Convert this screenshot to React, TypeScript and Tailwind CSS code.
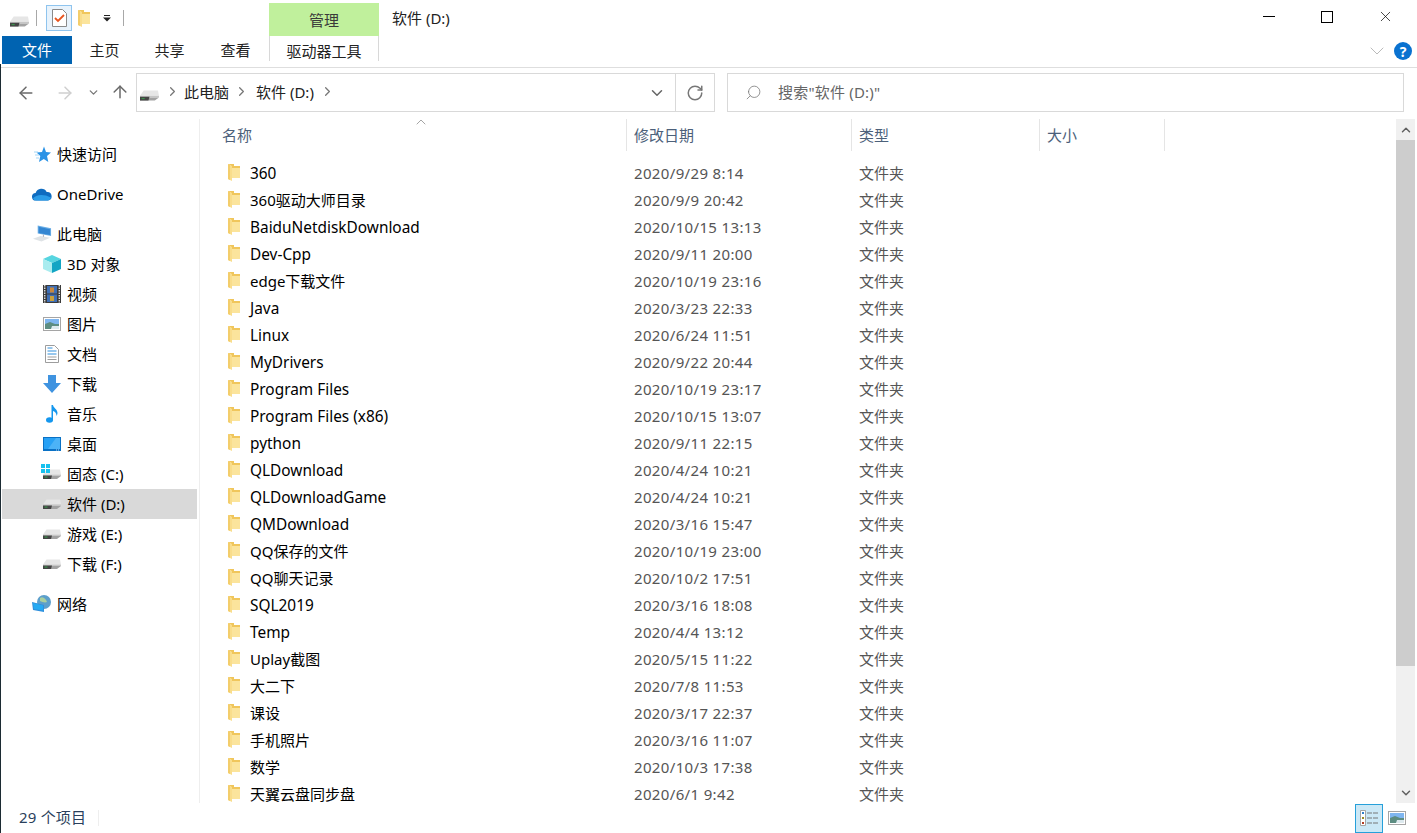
import React from "react";
import { ChevronRight, ChevronDown, ChevronUp, ArrowLeft, ArrowRight, ArrowUp, RotateCw, Search, X } from "lucide-react";

const files: [string, string][] = [
  ["360", "2020/9/29 8:14"],
  ["360驱动大师目录", "2020/9/9 20:42"],
  ["BaiduNetdiskDownload", "2020/10/15 13:13"],
  ["Dev-Cpp", "2020/9/11 20:00"],
  ["edge下载文件", "2020/10/19 23:16"],
  ["Java", "2020/3/23 22:33"],
  ["Linux", "2020/6/24 11:51"],
  ["MyDrivers", "2020/9/22 20:44"],
  ["Program Files", "2020/10/19 23:17"],
  ["Program Files (x86)", "2020/10/15 13:07"],
  ["python", "2020/9/11 22:15"],
  ["QLDownload", "2020/4/24 10:21"],
  ["QLDownloadGame", "2020/4/24 10:21"],
  ["QMDownload", "2020/3/16 15:47"],
  ["QQ保存的文件", "2020/10/19 23:00"],
  ["QQ聊天记录", "2020/10/2 17:51"],
  ["SQL2019", "2020/3/16 18:08"],
  ["Temp", "2020/4/4 13:12"],
  ["Uplay截图", "2020/5/15 11:22"],
  ["大二下", "2020/7/8 11:53"],
  ["课设", "2020/3/17 22:37"],
  ["手机照片", "2020/3/16 11:07"],
  ["数学", "2020/10/3 17:38"],
  ["天翼云盘同步盘", "2020/6/1 9:42"],
];

const Folder = ({ className = "" }: { className?: string }) => (
  <svg width="12" height="17" viewBox="0 0 12 17" className={className}>
    <path d="M0 0h6v2h6v12H3V2z" fill="#f0c65c" />
    <path d="M4 4h8v10H4z" fill="#fbe49c" />
    <path d="M0 0l4 2v15L0 15z" fill="#f9dd8c" />
    <path d="M0 0l2 1v15l-2-1z" fill="#f3cd6b" />
  </svg>
);

const Drive = ({ w = 18, led = "#3a8f4a" }: { w?: number; led?: string }) => (
  <svg width={w} height={(w * 10) / 18} viewBox="0 0 18 10">
    <path d="M0 5.500L3.500 .500H17l1 5z" fill="#e6e6e6" />
    <path d="M0 5.500h18v1.500H0z" fill="#c6c6c6" />
    <path d="M0 7h18l-4 3H0z" fill="#a2a2a2" />
    <path d="M0 6.500h9l-1 3.500H0z" fill="#444" />
    <rect x="1.500" y="7.500" width="3" height="1.200" fill={led} />
  </svg>
);

const Star = () => (
  <svg width="18" height="17" viewBox="0 0 18 17">
    <path d="M11 .5l2 5.500 5 .4-4 3.700 1.300 5.900-4.500-3-4.800 3 1.300-5.900-3.800-3.700 5.500-.4z" fill="#2b93e6" />
    <path d="M1 6h4M2 9h4M3 12h3" stroke="#a5d6f6" strokeWidth="1" />
  </svg>
);

const Cloud = () => (
  <svg width="20" height="14" viewBox="0 0 20 14">
    <path d="M4 13.500a3.800 3.800 0 0 1-.4-7.600A6 6 0 0 1 14.700 5a4.300 4.300 0 0 1 1.300 8.500z" fill="#0f6cc0" />
    <path d="M1 11.500c3-4 10-5 18-1 -.5 2-2 3-3.500 3H4c-1.500 0-2.500-.8-3-2z" fill="#2b9ce8" />
  </svg>
);

const Pc = () => (
  <svg width="21" height="18" viewBox="0 0 21 18">
    <path d="M6 0l14 3v8L6 8.500z" fill="#6aaee6" />
    <path d="M7 1.500l12 2.500v6L7 8z" fill="#3486d2" />
    <path d="M1 14l8-3 10 2-9 4z" fill="#dfe3e6" />
    <path d="M12 9.500v2.500" stroke="#aab" />
  </svg>
);

const Cube = () => (
  <svg width="18" height="18" viewBox="0 0 18 18">
    <path d="M9 0l9 4-9 4-9-4z" fill="#57d5e0" />
    <path d="M0 4l9 4v10l-9-4z" fill="#a9ecef" />
    <path d="M18 4l-9 4v10l9-4z" fill="#12a5c4" />
  </svg>
);

const Film = () => (
  <svg width="18" height="18" viewBox="0 0 18 18">
    <rect width="18" height="18" fill="#3b3b3b" />
    <path d="M1.700 0v18M16.300 0v18" stroke="#ddd" strokeWidth="1.400" strokeDasharray="1.500 1" />
    <rect x="4" y="1" width="10" height="7.500" fill="#3f6fb5" />
    <rect x="4" y="9.500" width="10" height="7.500" fill="#3f6fb5" />
    <rect x="7" y="2.500" width="4" height="5" fill="#c9883d" />
    <rect x="7" y="11" width="4" height="5" fill="#c9a03d" />
  </svg>
);

const Pic = ({ w = 18 }: { w?: number }) => (
  <svg width={w} height={(w * 14) / 18} viewBox="0 0 18 14">
    <rect x="0.500" y="0.500" width="17" height="13" fill="#fff" stroke="#a5a5a5" />
    <rect x="2" y="2" width="14" height="5" fill="#7fb6f0" />
    <path d="M2 7l5-2 5 2 4 0v5H2z" fill="#5d8d82" />
    <path d="M9 9h7v3H8z" fill="#dde9ee" />
  </svg>
);

const Doc = () => (
  <svg width="14" height="18" viewBox="0 0 14 18">
    <path d="M0.500 0.500h9l4 4v13h-13z" fill="#fff" stroke="#9d9d9d" />
    <path d="M2.500 3h5M2.500 6h9M2.500 9h9" stroke="#2f8fdc" />
    <path d="M2.500 12h9M2.500 14.500h9" stroke="#9d9d9d" />
  </svg>
);

const Down = () => (
  <svg width="18" height="18" viewBox="0 0 18 18">
    <path d="M5 0h8v8h5l-9 10L0 8h5z" fill="#3f93e0" />
  </svg>
);

const Note = () => (
  <svg width="12" height="18" viewBox="0 0 12 18">
    <ellipse cx="3.500" cy="15" rx="3.500" ry="2.800" fill="#1597ee" />
    <path d="M5.500 0h1.500c.3 3 4.500 4 4.500 8 0 1-.4 2-1 3 .2-3-2-4.500-3.500-5v9.500H5.500z" fill="#1597ee" />
  </svg>
);

const Desk = () => (
  <svg width="18" height="14" viewBox="0 0 18 14">
    <rect width="18" height="14" fill="#0a71c5" />
    <rect x="1" y="1" width="16" height="11" fill="#27a1f5" />
    <path d="M5 12L13 1h4v11z" fill="#4cb3f7" />
    <path d="M13 13h4" stroke="#fff" strokeWidth="0.700" strokeDasharray="1 1" />
  </svg>
);

const Win = () => (
  <svg width="9" height="9" viewBox="0 0 9 9" className="absolute -left-px -top-[5px]">
    <path d="M0 0h4v4H0zM5 0h4v4H5zM0 5h4v4H0zM5 5h4v4H5z" fill="#18c1ee" />
  </svg>
);

const Net = () => (
  <svg width="20" height="18" viewBox="0 0 20 18">
    <circle cx="12" cy="7" r="7" fill="#5c9fcb" />
    <path d="M8 3c3-2 6 1 7 4-2 1-5 0-7-1z" fill="#a9cf9e" />
    <path d="M0 7l12 3v7L1 15z" fill="#2f8fdc" />
    <path d="M1 8l10 2.500v5L2 14z" fill="#25aaf2" />
  </svg>
);

const NavRow = ({ icon, label, tier = 0, active = false, mt = "" }: { icon: React.ReactNode; label: string; tier?: number; active?: boolean; mt?: string }) => (
  <div className={`flex h-[30px] items-center shrink-0 ${active ? "bg-[#d9d9d9]" : ""} ${mt}`}>
    <div className={`flex w-[20px] justify-center ${tier ? "ml-[40px]" : "ml-[30px]"} relative`}>{icon}</div>
    <span className="ml-[5px] pt-px whitespace-nowrap text-[15px] text-black">{label}</span>
  </div>
);

const HeadCol = ({ w, label }: { w: string; label: string }) => (
  <div className={`${w} pl-[7px] pt-[1px] h-[32px] flex items-center border-r border-[#e5e5e5] text-[15px] text-[#4c607a] shrink-0`}>{label}</div>
);

const tab = "h-[28px] flex items-center justify-center text-[15px] pt-[1px]";

export default function App() {
  return (
    <div className="relative w-[1417px] h-[833px] overflow-hidden bg-white flex flex-col text-black" style={{ fontFamily: '"Noto Sans", "Noto Sans CJK SC", sans-serif' }}>
      <div className="absolute left-0 top-[64px] bottom-0 w-px bg-[#1c2b33]" />
      <div className="h-[36px] flex shrink-0">
        <div className="w-[269px] flex items-center pl-[10px] shrink-0">
          <div className="mt-[7px] flex"><Drive w={19} /></div>
          <div className="ml-[7px] h-[16px] w-px bg-[#a8a8a8]" />
          <div className="ml-[9px] w-[26px] h-[26px] border border-[#8fc4ee] bg-[#e8f3fc] flex items-center justify-center">
            <svg width="15" height="18" viewBox="0 0 15 18">
              <path d="M.5.500h10l4 4v13H.5z" fill="#fff" stroke="#8a8a8a" />
              <path d="M3 9l3 3 6-6" stroke="#e8541e" strokeWidth="1.800" fill="none" />
            </svg>
          </div>
          <Folder className="ml-[6px]" />
          <svg width="8" height="7" viewBox="0 0 8 7" className="ml-[13px]">
            <path d="M1 0h6v1H1zM0 2.500h8L4 6.500z" fill="#222" />
          </svg>
          <div className="ml-[12px] h-[16px] w-px bg-[#a8a8a8]" />
        </div>
        <div className="mt-[3px] pt-[1px] w-[110px] h-[33px] bg-[#c0f09c] flex items-center justify-center text-[15px] text-[#3a3a3a] shrink-0">管理</div>
        <div className="ml-[13px] mt-[3px] h-[30px] flex items-center text-[15px] text-[#222]">软件 (D:)</div>
        <div className="ml-auto flex">
          <div className="w-[58px] h-[33px] flex items-center justify-center"><div className="w-[12px] h-px bg-black" /></div>
          <div className="w-[58px] h-[33px] flex items-center justify-center"><div className="w-[12px] h-[12px] border border-black" /></div>
          <div className="w-[59px] mr-[2px] h-[33px] flex items-center justify-center"><X size={17} strokeWidth={1} color="#000" /></div>
        </div>
      </div>

      <div className="h-[31px] flex items-stretch shrink-0 border-b border-[#dedede] box-content">
        <div className={`ml-[2px] w-[70px] bg-[#0063b1] text-white ${tab}`}>文件</div>
        <div className={`w-[65px] text-[#222] ${tab}`}>主页</div>
        <div className={`w-[65px] text-[#222] ${tab}`}>共享</div>
        <div className={`w-[67px] text-[#222] ${tab}`}>查看</div>
        <div className="w-[110px] h-[25px] pt-[5px] border-x border-[#d8d8d8] flex items-center justify-center text-[15px] text-[#222]">驱动器工具</div>
        <div className="ml-auto flex items-center h-[30px]">
          <ChevronDown size={24} strokeWidth={0.8} color="#a8a8a8" />
          <div className="ml-[5px] mr-[5px] w-[18px] h-[18px] rounded-full bg-[#0a72d0] text-white text-[14px] font-bold flex items-center justify-center">?</div>
        </div>
      </div>

      <div className="h-[39px] mt-[5px] flex items-center shrink-0">
        <ArrowLeft size={20} strokeWidth={1.800} color="#6a6a6a" className="ml-[16px]" />
        <ArrowRight size={20} strokeWidth={1.800} color="#cfcfcf" className="ml-[19px]" />
        <ChevronDown size={13} strokeWidth={2.400} color="#777" className="ml-[12px]" />
        <ArrowUp size={20} strokeWidth={1.800} color="#6a6a6a" className="ml-[10px] -mt-[1px]" />
        <div className="ml-[6px] w-[539px] h-[39px] border border-[#d9d9d9] border-r-0 flex items-center">
          <div className="ml-[3px] mt-[6px] flex"><Drive w={19} /></div>
          <ChevronRight size={15} strokeWidth={2} color="#777" className="ml-[6px] -mt-[3px]" />
          <span className="ml-[4px] text-[15px] text-[#222]">此电脑</span>
          <ChevronRight size={15} strokeWidth={2} color="#777" className="ml-[5px] -mt-[3px]" />
          <span className="ml-[7px] text-[15px] text-[#222]">软件 (D:)</span>
          <ChevronRight size={15} strokeWidth={2} color="#777" className="ml-[6px] -mt-[3px]" />
          <ChevronDown size={18} strokeWidth={2} color="#666" className="ml-auto mr-[9px]" />
        </div>
        <div className="w-[40px] h-[39px] border border-[#d9d9d9] flex items-center justify-center">
          <RotateCw size={18} strokeWidth={2} color="#777" />
        </div>
        <div className="ml-[12px] w-[677px] h-[39px] border border-[#d9d9d9] flex items-center">
          <Search size={17} strokeWidth={1.100} color="#777" className="ml-[17px] -scale-x-100" />
          <span className="ml-[16px] text-[15px] tracking-[0.2px] text-[#666]">搜索"软件 (D:)"</span>
        </div>
      </div>

      <div className="flex-1 flex min-h-0 mt-[7px]">
        <div className="w-[200px] shrink-0 flex flex-col border-r border-[#eeeeee] pt-[20px] pl-[2px] pr-[2px]">
          <NavRow icon={<Star />} label="快速访问" />
          <NavRow icon={<Cloud />} label="OneDrive" mt="mt-[10px]" />
          <NavRow icon={<Pc />} label="此电脑" mt="mt-[10px]" />
          <NavRow tier={1} icon={<Cube />} label="3D 对象" />
          <NavRow tier={1} icon={<Film />} label="视频" />
          <NavRow tier={1} icon={<Pic />} label="图片" />
          <NavRow tier={1} icon={<Doc />} label="文档" />
          <NavRow tier={1} icon={<Down />} label="下载" />
          <NavRow tier={1} icon={<Note />} label="音乐" />
          <NavRow tier={1} icon={<Desk />} label="桌面" />
          <NavRow tier={1} icon={<><Win /><Drive /></>} label="固态 (C:)" />
          <NavRow tier={1} active icon={<Drive />} label="软件 (D:)" />
          <NavRow tier={1} icon={<Drive />} label="游戏 (E:)" />
          <NavRow tier={1} icon={<Drive />} label="下载 (F:)" />
          <NavRow icon={<Net />} label="网络" mt="mt-[10px]" />
        </div>
        <div className="flex-1 flex flex-col min-w-0 relative overflow-hidden">
          <ChevronUp size={16} strokeWidth={1} color="#777" className="absolute left-[213px] -top-[5px]" />
          <div className="flex shrink-0 pl-[15px]">
            <HeadCol w="w-[412px]" label="名称" />
            <HeadCol w="w-[225px]" label="修改日期" />
            <HeadCol w="w-[188px]" label="类型" />
            <HeadCol w="w-[125px]" label="大小" />
          </div>
          <div className="flex flex-col pt-[9px] pl-[28px]">
            {files.map(([n, d]) => (
              <div key={n} className="h-[27px] flex items-center shrink-0">
                <Folder className="-mt-[2px]" />
                <span className={`ml-[10px] w-[384px] whitespace-nowrap text-black ${/^[\x00-\x7f]+$/.test(n) ? "text-[15.4px]" : "text-[15px]"}`}>{n}</span>
                <span className="w-[225px] text-[15px] tracking-[0.35px] text-[#555]">{d}</span>
                <span className="text-[15px] text-[#555]">文件夹</span>
              </div>
            ))}
          </div>
        </div>
        <div className="w-[19px] mr-[2px] shrink-0 bg-[#f0f0f0] flex flex-col">
          <div className="h-[21px] flex items-center justify-center shrink-0"><ChevronUp size={14} strokeWidth={2.500} color="#606060" /></div>
          <div className="h-[526px] bg-[#cdcdcd] shrink-0" />
          <div className="mt-auto h-[21px] flex items-center justify-center"><ChevronDown size={14} strokeWidth={2.500} color="#606060" /></div>
        </div>
      </div>

      <div className="h-[30px] flex items-center shrink-0 relative">
        <span className="ml-[19px] -mt-[1px] text-[15px] tracking-[0.2px] text-[#2a3f5c]">29 个项目</span>
        <div className="ml-[12px] h-[16px] w-px bg-[#eee]" />
        <div className="ml-auto mr-[11px] flex items-center">
          <div className="w-[28px] h-[29px] border border-[#26a0da] bg-[#cbe8f6] flex items-center justify-center">
            <svg width="18" height="16" viewBox="0 0 18 16">
              <path d="M.5.500h5v15h-5z" fill="#fff" stroke="#a5a5a5" />
              <path d="M2 2h2v2H2z" fill="#2f7fcb" /><path d="M2 7h2v2H2z" fill="#9c8b20" /><path d="M2 12h2v2H2z" fill="#b33a20" />
              <path d="M7 3h5M13 3h5M7 8h5M13 8h5M7 13h5M13 13h5" stroke="#777" />
            </svg>
          </div>
          <div className="ml-[5px] flex"><Pic /></div>
        </div>
      </div>
    </div>
  );
}
